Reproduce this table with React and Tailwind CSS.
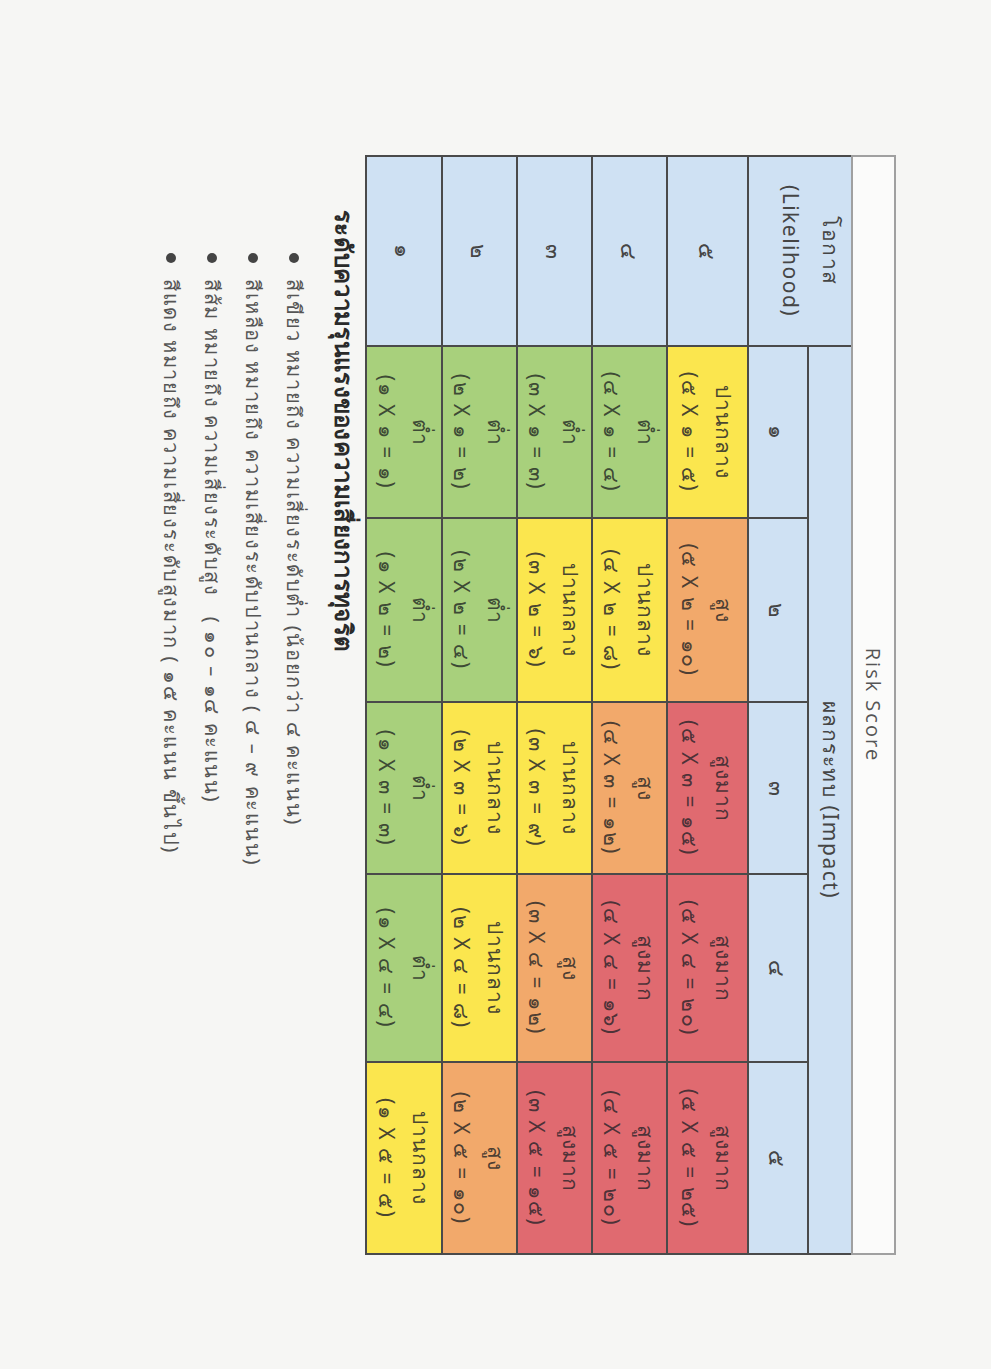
import React from "react";

const LV = {
  low: { label: "ต่ำ", cls: "bg-[#a8d07c] text-[#3d4a35]" },
  mid: { label: "ปานกลาง", cls: "bg-[#fbe64e] text-[#4a4630]" },
  high: { label: "สูง", cls: "bg-[#f2a96b] text-[#4e3f33]" },
  vhigh: { label: "สูงมาก", cls: "bg-[#e06a70] text-[#4e3238]" },
};

const ROWS = [
  { n: "๕", h: "h-[81px]", c: [["mid", "๕ X ๑ = ๕"], ["high", "๕ X ๒ = ๑๐"], ["vhigh", "๕ X ๓ = ๑๕"], ["vhigh", "๕ X ๔ = ๒๐"], ["vhigh", "๕ X ๕ = ๒๕"]] },
  { n: "๔", h: "h-[75px]", c: [["low", "๔ X ๑ = ๔"], ["mid", "๔ X ๒ = ๘"], ["high", "๔ X ๓ = ๑๒"], ["vhigh", "๔ X ๔ = ๑๖"], ["vhigh", "๔ X ๕ = ๒๐"]] },
  { n: "๓", h: "h-[75px]", c: [["low", "๓ X ๑ = ๓"], ["mid", "๓ X ๒ = ๖"], ["mid", "๓ X ๓ = ๙"], ["high", "๓ X ๔ = ๑๒"], ["vhigh", "๓ X ๕ = ๑๕"]] },
  { n: "๒", h: "h-[75px]", c: [["low", "๒ X ๑ = ๒"], ["low", "๒ X ๒ = ๔"], ["mid", "๒ X ๓ = ๖"], ["mid", "๒ X ๔ = ๘"], ["high", "๒ X ๕ = ๑๐"]] },
  { n: "๑", h: "h-[76px]", c: [["low", "๑ X ๑ = ๑"], ["low", "๑ X ๒ = ๒"], ["low", "๑ X ๓ = ๓"], ["low", "๑ X ๔ = ๔"], ["mid", "๑ X ๕ = ๕"]] },
];

const NUMS = ["๑", "๒", "๓", "๔", "๕"];
const BULLETS = [
  "สีเขียว หมายถึง ความเสี่ยงระดับต่ำ (น้อยกว่า ๔ คะแนน)",
  "สีเหลือง หมายถึง ความเสี่ยงระดับปานกลาง ( ๔ – ๙ คะแนน)",
  "สีส้ม หมายถึง ความเสี่ยงระดับสูง   ( ๑๐ – ๑๔ คะแนน)",
  "สีแดง หมายถึง ความเสี่ยงระดับสูงมาก ( ๑๕ คะแนน ขึ้นไป)",
];

export default function App() {
  return (
    <div className="w-[991px] h-[1369px] overflow-hidden bg-[#f6f6f4] font-['Noto_Sans','DejaVu_Sans',sans-serif]">
      <div className="pl-[896px] pt-[155px]">
        <div className="w-[1100px] origin-top-left rotate-90">
          <table className="table-fixed border-collapse w-[1098px] text-[#454545]">
            <colgroup>
              <col className="w-[190px]" />
              <col className="w-[172px]" />
              <col className="w-[184px]" />
              <col className="w-[172px]" />
              <col className="w-[188px]" />
              <col className="w-[192px]" />
            </colgroup>
            <tbody>
              <tr className="h-[43px]">
                <td colSpan={6} className="border-2 border-[#a0a0a0] bg-[#fbfbfa] text-center text-[20px] tracking-[2px] text-[#555] font-['Open_Sans',sans-serif]">
                  Risk Score
                </td>
              </tr>
              <tr className="h-[44px]">
                <td rowSpan={2} className="border-2 border-[#4a4a4a] bg-[#cfe1f3] pb-[22px] text-center text-[21px] tracking-[1.5px] leading-[40px]">
                  โอกาส
                  <br />
                  (Likelihood)
                </td>
                <td colSpan={5} className="border-2 border-[#4a4a4a] bg-[#cfe1f3] text-center text-[21px] tracking-[1.5px]">
                  ผลกระทบ (Impact)
                </td>
              </tr>
              <tr className="h-[59px]">
                {NUMS.map((n) => (
                  <td key={n} className="border-2 border-[#4a4a4a] bg-[#cfe1f3] text-center text-[22px]">
                    {n}
                  </td>
                ))}
              </tr>
              {ROWS.map((r) => (
                <tr key={r.n} className={r.h}>
                  <td className="border-2 border-[#4a4a4a] bg-[#cfe1f3] text-center text-[22px]">{r.n}</td>
                  {r.c.map(([lv, f], i) => (
                    <td key={i} className={`border-2 border-[#4a4a4a] text-center text-[21px] leading-[34px] ${LV[lv].cls}`}>
                      <div className="tracking-[1px]">{LV[lv].label}</div>
                      <div className="tracking-[1.5px]">({f})</div>
                    </td>
                  ))}
                </tr>
              ))}
            </tbody>
          </table>
          <div className="pl-[55px] pt-[4px]">
            <div className="text-[24px] font-bold tracking-[0.3px] text-[#2a2a2a] leading-[34px]">
              ระดับความรุนแรงของความเสี่ยงการทุจริต
            </div>
            <ul className="flex flex-col gap-[7px] pt-[16px] pl-[43px]">
              {BULLETS.map((b) => (
                <li key={b} className="flex items-center gap-[16px] text-[20px] tracking-[1.6px] text-[#555] leading-[34px] whitespace-pre">
                  <span className="w-[10px] h-[10px] rounded-full bg-[#444] shrink-0" />
                  <span>{b}</span>
                </li>
              ))}
            </ul>
          </div>
        </div>
      </div>
    </div>
  );
}
